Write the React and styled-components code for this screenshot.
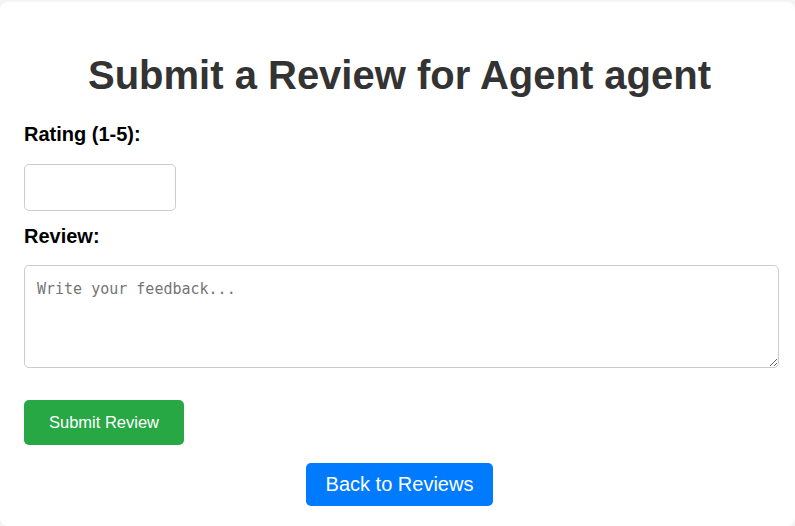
import React from 'react'
import styled, { createGlobalStyle } from 'styled-components'

const GlobalStyle = createGlobalStyle`
    html, body {
        margin: 0;
        padding: 0;
        background: #f4f4f4;
        font-family: 'Liberation Sans', Arial, sans-serif;
    }
`

const Card = styled.div`
    margin-top: 2px;
    background: #fff;
    border-radius: 8px;
    padding: 50px 20px 20px 24px;
    min-height: 504px;
    box-sizing: border-box;
`

const Title = styled.h1`
    margin: 0 0 25px;
    text-align: center;
    font-size: 40px;
    font-weight: bold;
    color: #333;
    line-height: 46px;
`

const Form = styled.form`
    display: flex;
    flex-direction: column;
    align-items: flex-start;
`

const Label = styled.label`
    display: block;
    font-size: 20px;
    font-weight: bold;
    color: #000;
    line-height: 23px;
    margin-bottom: ${p => p.$gap}px;
`

const Field = styled.input`
    width: 152px;
    height: 47px;
    box-sizing: border-box;
    border: 1px solid #ccc;
    border-radius: 5px;
    padding: 10px;
    font-size: 16px;
    margin-bottom: 14px;
`

const TextArea = styled.textarea`
    width: 755px;
    height: 103px;
    box-sizing: border-box;
    border: 1px solid #ccc;
    border-radius: 5px;
    padding: 14px 12px 12px;
    font-family: 'DejaVu Sans Mono', 'Liberation Mono', monospace;
    font-size: 15px;
    margin-bottom: 32px;
    &::placeholder {
        color: #757575;
    }
`

const Button = styled.button`
    border: none;
    border-radius: 5px;
    color: #fff;
    font-family: 'Liberation Sans', Arial, sans-serif;
    cursor: pointer;
    background: ${p => p.$color};
    font-size: ${p => p.$size}px;
    height: ${p => p.$h}px;
    padding: 0 ${p => p.$pad}px;
`

const BackRow = styled.div`
    display: flex;
    justify-content: center;
    margin-top: 18px;
`

const App = () => {
    return (
        <>
            <GlobalStyle />
            <Card>
                <Title>Submit a Review for Agent agent</Title>
                <Form onSubmit={e => e.preventDefault()}>
                    <Label htmlFor="rating" $gap={18}>Rating (1-5):</Label>
                    <Field id="rating" type="number" min="1" max="5" />
                    <Label htmlFor="review" $gap={17}>Review:</Label>
                    <TextArea id="review" placeholder="Write your feedback..." />
                    <Button type="submit" $color="#28a745" $size={16.5} $h={45} $pad={25}>Submit Review</Button>
                </Form>
                <BackRow>
                    <Button $color="#007bff" $size={20} $h={43} $pad={20}>Back to Reviews</Button>
                </BackRow>
            </Card>
        </>
    )
}

export default App
